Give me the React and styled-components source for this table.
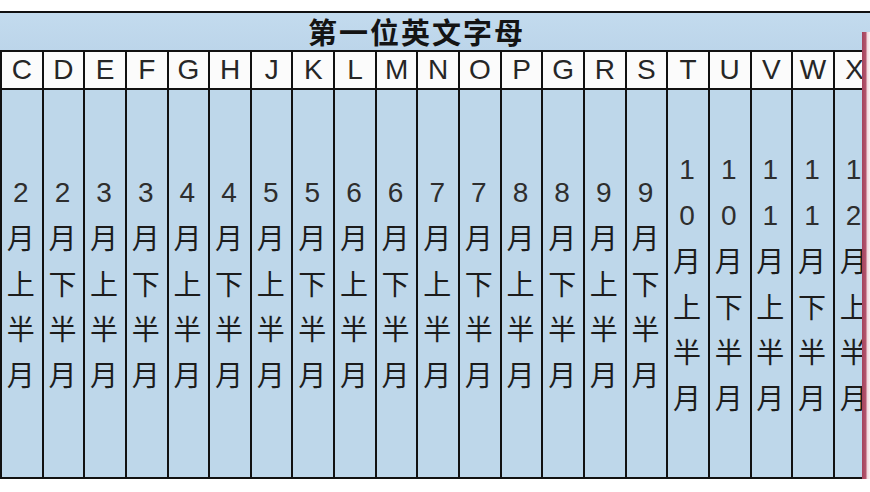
import styled, { createGlobalStyle } from 'styled-components';

const GlobalStyle = createGlobalStyle`
  html, body {
    margin: 0;
    padding: 0;
    background: #ffffff;
    overflow: hidden;
  }
`;

const letters = ['C', 'D', 'E', 'F', 'G', 'H', 'J', 'K', 'L', 'M', 'N', 'O', 'P', 'G', 'R', 'S', 'T', 'U', 'V', 'W', 'X'];
const months = [2, 2, 3, 3, 4, 4, 5, 5, 6, 6, 7, 7, 8, 8, 9, 9, 10, 10, 11, 11, 12];

const Page = styled.div`
  position: relative;
  width: 870px;
  height: 492px;
  padding-top: 11px;
  box-sizing: border-box;
  overflow: hidden;
  background: #fff;
`;

const Table = styled.div`
  display: grid;
  grid-template-columns: repeat(21, 41.65px);
  grid-template-rows: 37px 40px 387px;
  width: 875px;
  border-top: 2px solid #111;
  border-bottom: 2px solid #111;
  font-family: 'Noto Sans CJK SC', 'Noto Sans', sans-serif;
  color: #1e1e1e;
`;

const TitleCell = styled.div`
  grid-column: span ${(p) => p.span};
  display: flex;
  align-items: center;
  justify-content: center;
  background: linear-gradient(#c3dbee, #bcd5ea);
  font-size: 29px;
  font-weight: 700;
  letter-spacing: 2px;
  color: #141414;
  line-height: 1;
`;

const LetterCell = styled.div`
  display: flex;
  align-items: center;
  justify-content: center;
  background: #fbfbfb;
  border-top: 2px solid #111;
  border-bottom: 2px solid #111;
  border-left: 2px solid #111;
  box-sizing: border-box;
  font-family: 'Liberation Sans', Arial, sans-serif;
  font-size: 28px;
  color: #262626;
`;

const MonthCell = styled.div`
  display: flex;
  flex-direction: column;
  align-items: center;
  justify-content: center;
  background: #bed7ea;
  border-left: 2px solid #111;
  box-sizing: border-box;
  padding-right: 2px;
`;

const Char = styled.span`
  display: block;
  height: 45.5px;
  line-height: 45.5px;
  font-size: ${(p) => (p.digit ? '28px' : '28px')};
  color: ${(p) => (p.digit ? '#2e2e2e' : '#1c1c1c')};
  font-family: ${(p) => (p.digit ? "'Liberation Sans', Arial, sans-serif" : "'Noto Sans CJK SC', sans-serif")};
`;

const Marker = styled.div`
  position: absolute;
  left: 862px;
  top: 32px;
  width: 8px;
  height: 447px;
  background: linear-gradient(90deg, #a4435d 0, #b3566e 4px, #f1d6dc 5px, #fbf3f4 8px);
`;

export default function App() {
  return (
    <Page>
      <GlobalStyle />
      <Table>
        <TitleCell span={20}>第一位英文字母</TitleCell>
        <TitleCell span={1} />
        {letters.map((l, i) => (
          <LetterCell key={'l' + i}>{l}</LetterCell>
        ))}
        {months.map((m, i) => {
          const text = `${m}月${i % 2 === 0 ? '上' : '下'}半月`;
          return (
            <MonthCell key={'m' + i}>
              {text.split('').map((c, j) => (
                <Char key={j} digit={/\d/.test(c)}>
                  {c}
                </Char>
              ))}
            </MonthCell>
          );
        })}
      </Table>
      <Marker />
    </Page>
  );
}
